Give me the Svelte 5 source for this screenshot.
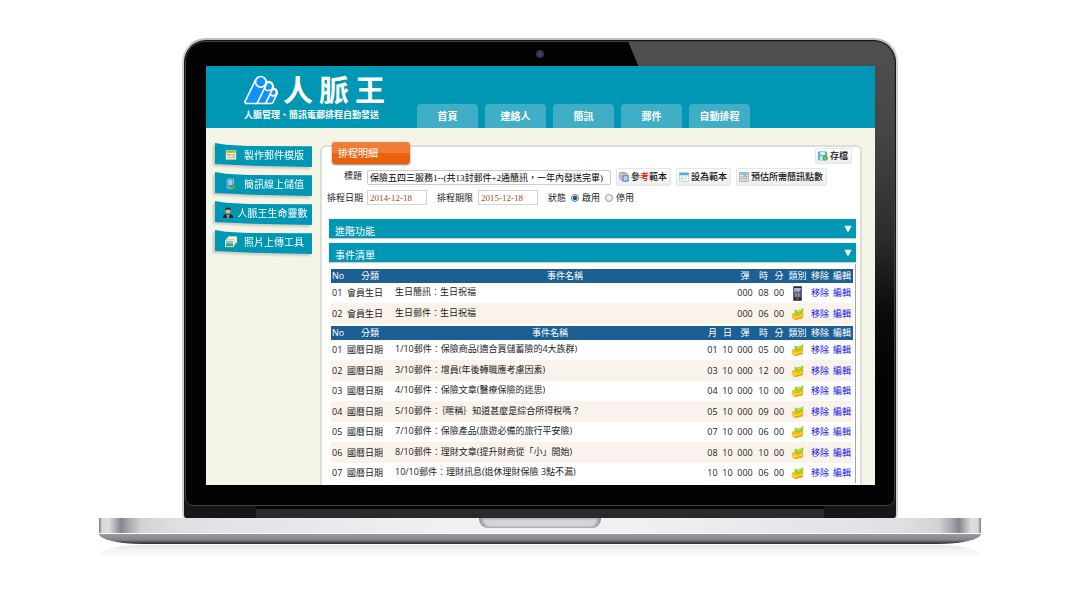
<script>
  const tabs = ['首頁', '連絡人', '簡訊', '郵件', '自動排程'];
  const tools = [
    { icon: 'template', text: '製作郵件模版' },
    { icon: 'topup', text: '簡訊線上儲值' },
    { icon: 'person', text: '人脈王生命靈數' },
    { icon: 'photos', text: '照片上傳工具' }
  ];
  const sections = ['進階功能', '事件清單'];
  const groups = [
    {
      dated: false,
      rows: [
        { no: '01', kind: '會員生日', name: '生日簡訊：生日祝福', times: ['000', '08', '00'], icon: 'phone' },
        { no: '02', kind: '會員生日', name: '生日郵件：生日祝福', times: ['000', '06', '00'], icon: 'mail' }
      ]
    },
    {
      dated: true,
      rows: [
        { no: '01', kind: '國曆日期', name: '1/10郵件：保險商品(適合買儲蓄險的4大族群)', times: ['01', '10', '000', '05', '00'], icon: 'mail' },
        { no: '02', kind: '國曆日期', name: '3/10郵件：增員(年後轉職應考慮因素)', times: ['03', '10', '000', '12', '00'], icon: 'mail' },
        { no: '03', kind: '國曆日期', name: '4/10郵件：保險文章(醫療保險的迷思)', times: ['04', '10', '000', '10', '00'], icon: 'mail' },
        { no: '04', kind: '國曆日期', name: '5/10郵件：｛暱稱｝知道甚麼是綜合所得稅嗎？', times: ['05', '10', '000', '09', '00'], icon: 'mail' },
        { no: '05', kind: '國曆日期', name: '7/10郵件：保險產品(旅遊必備的旅行平安險)', times: ['07', '10', '000', '06', '00'], icon: 'mail' },
        { no: '06', kind: '國曆日期', name: '8/10郵件：理財文章(提升財商從「小」開始)', times: ['08', '10', '000', '10', '00'], icon: 'mail' },
        { no: '07', kind: '國曆日期', name: '10/10郵件：理財訊息(退休理財保險 3點不漏)', times: ['10', '10', '000', '06', '00'], icon: 'mail' }
      ]
    }
  ];
  let title = $state('保險五四三服務1--(共13封郵件+2通簡訊，一年內發送完畢)');
  let start = $state('2014-12-18');
  let end = $state('2015-12-18');
  let status = $state('on');
</script>

{#snippet glyph(name)}
  {#if name === 'template'}
    <svg class="tool-icon" viewBox="0 0 12 12" aria-hidden="true">
      <rect x="1" y="1.5" width="10" height="9" fill="#f3efdc" stroke="#c9c7b4" stroke-width=".6" />
      <rect x="1.4" y="2" width="9.2" height="1.8" fill="#8fc31f" />
      <rect x="2.3" y="5" width="3" height="2" fill="#f1a72c" />
      <path d="M6.3 5.5h3.6M6.3 7h3.6M2.3 8.7h7.6" stroke="#9aa59a" stroke-width=".7" />
    </svg>
  {:else if name === 'topup'}
    <svg class="tool-icon" viewBox="0 0 12 12" aria-hidden="true">
      <rect x="2.2" y=".8" width="6.4" height="10" rx="1" fill="#4f7fa8" stroke="#d4e3ee" stroke-width=".6" />
      <rect x="3.4" y="2" width="4" height="5" fill="#9fd1f5" />
      <path d="M3.6 8.4h3.6M3.6 9.5h2.5" stroke="#b8cbd8" stroke-width=".6" />
      <path d="M5.8 7.8h2.6V6.4L11.4 9l-3 2.6v-1.5H5.8z" fill="#4fb82e" stroke="#2a7c18" stroke-width=".3" />
    </svg>
  {:else if name === 'person'}
    <svg class="tool-icon" viewBox="0 0 12 12" aria-hidden="true">
      <path d="M.8 11c0-3 1.8-4.2 5.2-4.2s5.2 1.2 5.2 4.2z" fill="#2a2a2e" />
      <path d="M4.600 6.800L6 8.600l1.400-1.800L6.800 10.800H5.200z" fill="#fff" />
      <path d="M5.700 7.500h.7l.3 2.700-.7.7-.7-.7z" fill="#c62d1c" />
      <circle cx="6" cy="4" r="2.5" fill="#e8b386" />
      <path d="M3.300 4C3 1.400 4.400.5 6.100.5S9 1.500 8.700 4C8.200 3 7.500 2.600 6 2.600S3.800 3 3.300 4z" fill="#2b1b14" />
    </svg>
  {:else if name === 'photos'}
    <svg class="tool-icon" viewBox="0 0 12 12" aria-hidden="true">
      <rect x="3.5" y=".8" width="8" height="6" fill="#f6e9b6" stroke="#fff" stroke-width=".7" />
      <rect x="2" y="2.5" width="8" height="6" fill="#f0c65a" stroke="#fff" stroke-width=".7" />
      <rect x=".6" y="4.2" width="8" height="6.5" fill="#7cc0f0" stroke="#fff" stroke-width=".8" />
      <path d="M1 10.300V8.500l2.200-1.400 1.800 1.200 1.600-.9 1.600 1.200v1.700z" fill="#5da23a" />
    </svg>
  {:else if name === 'phone'}
    <svg class="phone-icon" viewBox="0 0 9 15" aria-hidden="true">
      <rect x=".3" y=".3" width="8.4" height="14.4" rx="1" fill="#25262b" stroke="#55565c" stroke-width=".5" />
      <rect x="1.2" y="2" width="6.6" height="9.5" fill="#5b6798" />
      <path d="M1.200 6.500l2.300-2 1.500 2 2.800-3V2H1.200z" fill="#a9b4d0" />
      <path d="M2 8h2M5 8.500h2M2 10h5" stroke="#d98c6a" stroke-width=".9" />
      <rect x="3.2" y="12.5" width="2.6" height="1" fill="#8d8f96" />
    </svg>
  {:else if name === 'mail'}
    <svg class="mail-icon" viewBox="0 0 12 12" aria-hidden="true">
      <path d="M2.600 1.800L6.400 2.400 11.400.2 10.700 6.800l-7.600.6z" fill="#8fce1e" stroke="#c4e673" stroke-width=".4" />
      <path d="M4.800 2.800l2.100 1.500L9.800 1.600" fill="none" stroke="#e3f5a9" stroke-width=".8" />
      <path d="M.4 5.800L3.300 4.600l1.200 1.600 2.300.1 3.800-1.700.6 1-.7 4.600L3 11.900.8 10.500z" fill="#f9bb14" />
      <path d="M.4 5.800l2.500 1.900 4.100-.2 3.900-2.100-.6 4.500L3 11.900.8 10.500z" fill="#ffd22e" stroke="#de950d" stroke-width=".4" />
      <path d="M3.200 11.200l7-2" stroke="#dd950c" stroke-width=".9" />
    </svg>
  {:else if name === 'copy'}
    <svg class="mini" viewBox="0 0 12 12" aria-hidden="true">
      <rect x=".6" y=".6" width="7.5" height="8" rx=".8" fill="#d3e4f3" stroke="#6c93b8" stroke-width=".8" />
      <rect x="2.5" y="2" width="7.5" height="8" rx=".8" fill="#e7f0f8" stroke="#5c86ad" stroke-width=".8" />
      <rect x="4.5" y="3.8" width="6.8" height="7.4" rx=".8" fill="#7fb4e0" stroke="#3f6f9c" stroke-width=".8" />
      <path d="M6 6h4M6 7.600h4M6 9.200h3" stroke="#fff" stroke-width=".7" />
      <circle cx="4.5" cy="5" r="1.2" fill="#d97757" />
    </svg>
  {:else if name === 'form'}
    <svg class="mini" viewBox="0 0 12 12" aria-hidden="true">
      <rect x=".5" y="1" width="11" height="10" fill="#fff" stroke="#a7b9c6" stroke-width=".7" />
      <rect x=".5" y="1" width="11" height="3" fill="#47aee8" />
      <rect x="1.7" y="5.5" width="3.2" height="4.2" fill="#d3dde4" />
      <path d="M6 6h4.300M6 7.700h4.300M6 9.400h3" stroke="#c3d0d9" stroke-width=".8" />
    </svg>
  {:else if name === 'calc'}
    <svg class="mini" viewBox="0 0 12 12" aria-hidden="true">
      <rect x=".6" y=".6" width="10.8" height="10.8" fill="#eef1f3" stroke="#8e9aa3" stroke-width=".8" />
      <rect x="1.5" y="1.5" width="9" height="2" fill="#7db5dc" />
      <path d="M3.300 4v7M6 4v7M8.700 4v7M1 5.800h10M1 8.200h10" stroke="#98a3ab" stroke-width=".7" />
      <rect x="6.2" y="4" width="2.2" height="1.5" fill="#e68d4b" />
    </svg>
  {:else if name === 'save'}
    <svg class="mini" viewBox="0 0 12 12" aria-hidden="true">
      <rect x=".6" y="1" width="9.8" height="9.8" rx=".8" fill="#55b4ec" stroke="#2c87c0" stroke-width=".6" />
      <rect x="2.6" y="1.3" width="5.6" height="3.4" fill="#e6f4fc" />
      <rect x="2.3" y="6.3" width="6" height="4.3" fill="#d8ecf7" />
      <circle cx="8.6" cy="8.4" r="3" fill="#3fae2a" />
      <path d="M8.600 6.800v3M7.300 8.600l1.300 1.400 1.300-1.400" fill="none" stroke="#c8f0a0" stroke-width=".8" />
    </svg>
  {/if}
{/snippet}

<main>
  <div class="lid">
    <div class="glass">
      <i class="glare"></i>
      <i class="camera"></i>
      <div class="screen">
        <header>
          <div class="brand">
            <div class="brand-top">
              <svg class="logo" viewBox="0 0 34 30" aria-hidden="true">
                <g fill="#0f92fb" stroke="#fff" stroke-width="1.7" stroke-linejoin="round">
                  <path d="M22 28.500c-1.500 0-1.800-1.200-1.300-2.200l5-10.500a3.900 3.900 0 0 1 7.200 3.200l-3.700 8q-.7 1.500-2.200 1.500z" />
                  <circle cx="29.2" cy="17.5" r="3.3" />
                  <path d="M12.500 28.500c-1.500 0-1.900-1.200-1.300-2.300L20 9.500a4.800 4.800 0 0 1 8.800 4l-6.500 13.600q-.6 1.400-2 1.400z" />
                  <circle cx="24.5" cy="11.5" r="4.2" />
                  <path d="M2.800 28.500c-1.600 0-2.200-1.200-1.500-2.500L11.500 5a5.900 5.900 0 0 1 10.800 4.500l-8.600 17.600q-.7 1.400-2.200 1.400z" />
                  <circle cx="16.8" cy="6.8" r="5.3" />
                </g>
              </svg>
              <div class="name"><span>人</span><span>脈</span><span>王</span></div>
            </div>
            <p>人脈管理、簡訊電郵排程自動發送</p>
          </div>
          <nav>
            {#each tabs as tab}
              <a href="#top">{tab}</a>
            {/each}
          </nav>
        </header>

        <div class="body">
          <aside>
            {#each tools as tool}
              <a href="#tools">{@render glyph(tool.icon)}<span>{tool.text}</span></a>
            {/each}
          </aside>

          <section class="panel">
            <h1>排程明細</h1>
            <div class="save-row">
              <button class="small">{@render glyph('save')}<span>存檔</span></button>
            </div>
            <div class="title-row">
              <label class="lead" for="title">標題</label>
              <input class="title" id="title" type="text" bind:value={title} />
              <button class="small">{@render glyph('copy')}<span>參<em>考</em>範本</span></button>
              <button class="small">{@render glyph('form')}<span>設為範本</span></button>
              <button class="small">{@render glyph('calc')}<span>預估所需簡訊點數</span></button>
            </div>
            <div class="date-row">
              <div class="field">
                <label class="lead" for="start">排程日期</label>
                <input class="date" id="start" type="text" bind:value={start} />
              </div>
              <div class="field">
                <label for="end">排程期限</label>
                <input class="date" id="end" type="text" bind:value={end} />
              </div>
              <div class="field" role="radiogroup" aria-labelledby="status">
                <span id="status">狀態</span>
                <label class="choice"><input type="radio" name="status" value="on" bind:group={status} />啟用</label>
                <label class="choice"><input type="radio" name="status" value="off" bind:group={status} />停用</label>
              </div>
            </div>

            <div class="sections">
              {#each sections as section}
                <button class="bar">
                  <span>{section}</span>
                  <svg viewBox="0 0 8 8" aria-hidden="true"><path d="M.3.800h7.400L4 7.500z" fill="#fff" /></svg>
                </button>
              {/each}
            </div>

            <div class="list">
              {#each groups as group}
                <table>
                  <thead>
                    <tr>
                      <th class="no">No</th>
                      <th class="kind">分類</th>
                      <th>事件名稱</th>
                      {#if group.dated}
                        <th class="day">月</th>
                        <th class="day">日</th>
                      {/if}
                      <th class="offset">彈</th>
                      <th class="hour">時</th>
                      <th class="minute">分</th>
                      <th class="type">類別</th>
                      <th class="action">移除</th>
                      <th class="action">編輯</th>
                    </tr>
                  </thead>
                  <tbody>
                    {#each group.rows as row}
                      <tr>
                        <td>{row.no}</td>
                        <td class="kind">{row.kind}</td>
                        <td class="event">{row.name}</td>
                        {#each row.times as time}
                          <td class="num">{time}</td>
                        {/each}
                        <td class="pic">{@render glyph(row.icon)}</td>
                        <td class="link"><a href="#remove">移除</a></td>
                        <td class="link"><a href="#edit">編輯</a></td>
                      </tr>
                    {/each}
                  </tbody>
                </table>
              {/each}
            </div>
          </section>
        </div>
      </div>
    </div>
    <div class="hinge"></div>
  </div>
  <div class="deck"><div class="notch"></div></div>
  <div class="underside"></div>
  <div class="reflection"></div>
</main>

<style>
  :global(body) {
    margin: 0;
    background: #fff;
  }
  * {
    box-sizing: border-box;
  }
  main {
    padding: 38px 99px 0;
    font: 9px/12px 'Open Sans', 'Noto Sans CJK TC', sans-serif;
    color: #222;
  }
  button,
  input {
    font: inherit;
    margin: 0;
  }
  a {
    text-decoration: none;
  }

  .lid {
    margin: 0 83px;
    padding: 1px 1px 0;
    border: 2px solid #d2d2d5;
    border-top-color: #bdbdc0;
    border-bottom: 0;
    border-radius: 24px 24px 4px 4px;
    background: #14181b;
  }
  .glass {
    position: relative;
    padding: 24px 19px 20px 20px;
    border: 1px solid #3e4044;
    border-radius: 20px 20px 8px 8px;
    background: #020202;
  }
  .glare {
    position: absolute;
    inset: 0;
    border-radius: 19px 19px 8px 8px;
    background: linear-gradient(#505052, #454546 20%, #2c2c2d 42%, #0b0b0b 58%, #020202 75%);
    clip-path: polygon(62.5% 0, 100% 0, 100% 100%, 89% 100%);
  }
  .camera {
    position: absolute;
    top: 8px;
    left: calc(50% - 4px);
    width: 8px;
    height: 8px;
    border: 2px solid #33343c;
    border-radius: 50%;
    background: #4a35a0;
  }
  .hinge {
    height: 12px;
    margin: 0 71px;
    border-top: 3px solid #05070a;
    background: #252b2f;
  }
  .deck {
    height: 16px;
    border-bottom: 1px solid #fafafa;
    background: linear-gradient(90deg, #77777b 0, #d8d8db 3px, #dddde0 10px, #85858b 22px, #a9a9ae 30px, #d2d2d5 42px, #e0e0e2 80px, #f1f1f2 40%, #f1f1f2 60%, #e0e0e2 calc(100% - 80px), #d2d2d5 calc(100% - 42px), #a9a9ae calc(100% - 30px), #85858b calc(100% - 22px), #dddde0 calc(100% - 10px), #d8d8db calc(100% - 3px), #77777b 100%);
  }
  .notch {
    width: 122px;
    height: 10px;
    margin: 0 auto;
    border-radius: 0 0 9px 9px;
    background: #d6d6d9;
    box-shadow: inset 3px 0 3px #96969b, inset -3px 0 3px #96969b;
  }
  .underside {
    height: 10px;
    border-radius: 0 0 44px 44px / 0 0 10px 10px;
    background: linear-gradient(#9a9aa2, #83838a 60%, #3a3a3e 90%, #2c2c30);
  }
  .reflection {
    height: 11px;
    margin-top: 1px;
    border-radius: 44px 44px 0 0 / 10px 10px 0 0;
    background: linear-gradient(#e4e4e5, #f2f2f2 40%, #fafafa);
  }

  .screen {
    position: relative;
    overflow: hidden;
    background: #f4f5e7;
  }
  header {
    display: flex;
    gap: 31px;
    height: 62px;
    padding-left: 38px;
    background: #0097b5;
    color: #fff;
  }
  .brand {
    width: 142px;
    padding-top: 7px;
    white-space: nowrap;
  }
  .brand-top {
    display: flex;
    gap: 5px;
    height: 34px;
    align-items: center;
  }
  .logo {
    width: 34px;
    height: 30px;
  }
  .name {
    display: flex;
    gap: 6px;
    font-size: 30px;
    font-weight: 700;
    line-height: 34px;
  }
  .brand p {
    margin: 2px 0 0;
    font-weight: 700;
  }
  nav {
    display: flex;
    gap: 7px;
    align-items: flex-end;
  }
  nav a {
    width: 61px;
    height: 24px;
    border-radius: 4px 4px 0 0;
    background: #40aec6;
    color: #fff;
    font-size: 10px;
    font-weight: 700;
    line-height: 25px;
    text-align: center;
  }

  .body {
    display: flex;
    align-items: flex-start;
  }
  aside {
    display: flex;
    flex: none;
    flex-direction: column;
    gap: 5px;
    width: 114px;
    padding: 15px 8px 0;
    filter: drop-shadow(-2px 2px 1px #0000002e);
  }
  aside a {
    display: flex;
    gap: 7px;
    align-items: center;
    justify-content: center;
    height: 24px;
    padding-left: 3px;
    background: #0097b5;
    clip-path: polygon(1% 0, 12% 7%, 35% 12%, 100% 14%, 100% 100%, 40% 95%, 1% 88%);
    color: #fff;
    font-size: 10px;
    white-space: nowrap;
  }
  aside a:nth-child(3) {
    gap: 4px;
  }
  .tool-icon {
    flex: none;
    width: 12px;
    height: 12px;
  }

  .panel {
    position: relative;
    flex: 1;
    min-width: 0;
    margin: 17px 13px 0 0;
    padding-bottom: 2px;
    border: 2px solid #deded5;
    border-bottom: 0;
    border-radius: 6px 6px 0 0;
    background: #fff;
  }
  h1 {
    position: absolute;
    top: -5px;
    left: 10px;
    margin: 0;
    padding: 0 32px 0 6px;
    border-radius: 3px;
    background: linear-gradient(#f07c35 50%, #e8640f 50%, #ea5f0a);
    box-shadow: 0 1px 2px #00000080;
    color: #fff;
    font-size: 10px;
    font-weight: 400;
    line-height: 22px;
  }
  .small {
    display: flex;
    flex: none;
    gap: 2px;
    align-items: center;
    padding: 0 3px 0 2px;
    border: 1px solid #e6e6e6;
    border-radius: 2px;
    background: linear-gradient(#fff, #eee);
    color: #111;
    font-weight: 500;
    white-space: nowrap;
  }
  .small em {
    color: #f00;
    font-style: normal;
  }
  .mini {
    width: 10px;
    height: 10px;
  }
  .save-row {
    display: flex;
    justify-content: flex-end;
    height: 17px;
    padding: 1px 8px 0 0;
  }
  .title-row,
  .date-row {
    display: flex;
    padding-left: 5px;
    white-space: nowrap;
  }
  .title-row {
    gap: 5px;
    height: 18px;
    margin-top: 4px;
  }
  .title-row label {
    line-height: 16px;
  }
  .lead {
    width: 35px;
    text-align: right;
  }
  .title {
    flex: 0 1 244px;
    align-self: center;
    min-width: 0;
    height: 15px;
    padding: 0 2px;
    border: 1px solid #ccc;
    border-radius: 2px;
    color: #000;
    font-family: 'Liberation Serif', 'Noto Sans CJK TC', serif;
  }
  .date-row {
    gap: 10px;
    height: 15px;
    margin-top: 4px;
  }
  .field {
    display: flex;
    gap: 5px;
    align-items: center;
  }
  .date {
    width: 60px;
    height: 15px;
    padding: 0 2px;
    border: 1px solid #d4d4d4;
    color: #a8481c;
    font-family: 'Liberation Serif', serif;
  }
  .choice {
    display: flex;
    gap: 3px;
    align-items: center;
  }
  .choice input {
    width: 8px;
    height: 8px;
    border: 1px solid #999;
    border-radius: 50%;
    appearance: none;
    background: #eee;
  }
  .choice input:checked {
    border-color: #777;
    background: radial-gradient(#0c5a8c 40%, #d5e4ec 60%);
  }

  .sections {
    display: grid;
    gap: 5px;
    margin: 14px 4px 2px 7px;
  }
  .bar {
    display: flex;
    align-items: center;
    justify-content: space-between;
    height: 19px;
    padding: 0 4px 0 6px;
    border: 0;
    background: #0097b5;
    box-shadow: 0 1px 1px #ccc;
    color: #fff;
    font-size: 10px;
  }
  .bar span {
    padding-top: 5px;
  }
  .bar svg {
    width: 8px;
    height: 8px;
  }

  .list {
    display: grid;
    gap: 2px;
    margin: 0 4px 0 7px;
    padding: 5px 2px 0;
    border-right: 1px solid #a5a5a5;
    background: #fffef6;
  }
  table {
    width: 100%;
    border-collapse: collapse;
    table-layout: fixed;
    white-space: nowrap;
  }
  th,
  td {
    padding: 0;
  }
  th {
    height: 14px;
    background: #1b5f94;
    color: #fff;
    font-weight: 400;
  }
  .no {
    width: 14px;
  }
  th.kind {
    width: 50px;
  }
  td.kind {
    padding-left: 2px;
  }
  .day {
    width: 15px;
  }
  .offset {
    width: 20px;
  }
  .hour {
    width: 17px;
  }
  .minute {
    width: 14px;
  }
  .type {
    width: 23px;
  }
  .action {
    width: 22px;
  }
  tbody tr {
    height: 20px;
    background: #fff;
  }
  tbody tr:nth-child(even) {
    height: 21px;
    background: #faf3ec;
  }
  td:first-child {
    padding-left: 1px;
  }
  .event {
    padding-bottom: 2px;
  }
  .num,
  .pic,
  .link {
    text-align: center;
  }
  .link a {
    color: #1414f0;
  }
  .pic {
    line-height: 0;
  }
  .phone-icon {
    width: 9px;
    height: 15px;
  }
  .mail-icon {
    width: 12px;
    height: 12px;
  }
</style>
